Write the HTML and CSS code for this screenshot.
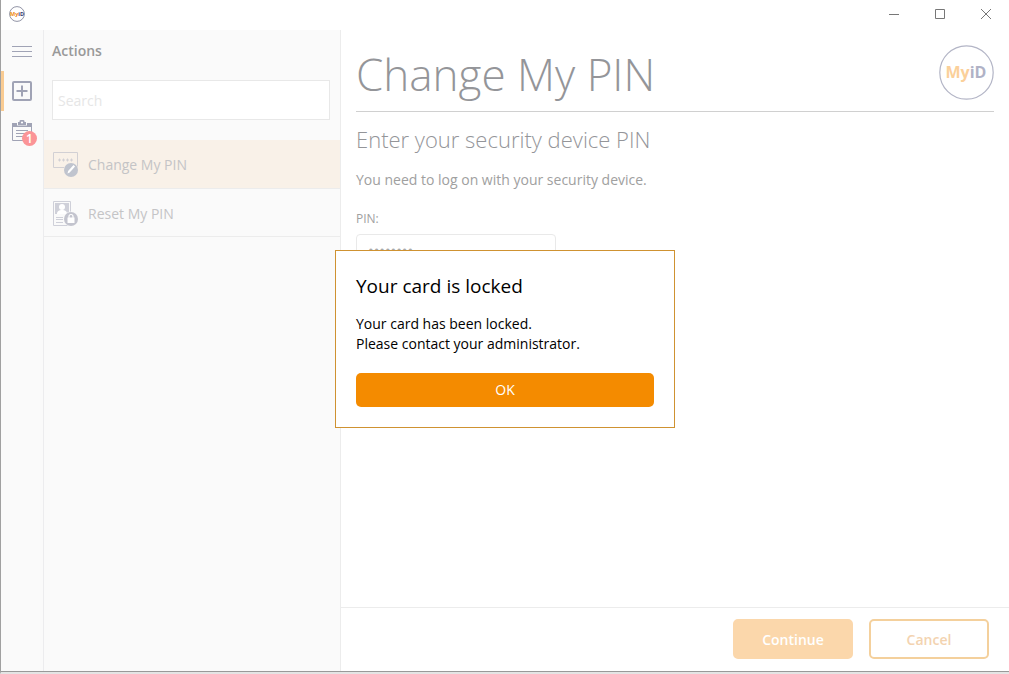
FILE: index.html
```html
<!DOCTYPE html>
<html lang="en">
<head>
	<meta charset="UTF-8">
	<meta name="viewport" content="width=device-width, initial-scale=1">
	<title>MyID</title>
	<link rel="stylesheet" href="styles.css">
</head>
<body>
	<div class="window">
		<!-- title bar -->
		<header class="titlebar">
			<svg class="app-icon" viewBox="0 0 16 16" role="img" aria-label="MyiD">
				<circle cx="8" cy="8" r="7.4" fill="#fff" stroke="#76788f" stroke-width="0.8"/>
				<text x="8" y="10" text-anchor="middle" font-size="5.5"><tspan fill="#f08a10">My</tspan><tspan fill="#363a6e">iD</tspan></text>
			</svg>
			<div class="win-buttons">
				<button type="button" aria-label="Minimize"><svg viewBox="0 0 12 12"><path d="M1 6.5h10"/></svg></button>
				<button type="button" aria-label="Maximize"><svg viewBox="0 0 12 12"><path d="M1.5 1.5h9v9h-9z"/></svg></button>
				<button type="button" aria-label="Close"><svg viewBox="0 0 12 12"><path d="M1 1l10 10M11 1L1 11"/></svg></button>
			</div>
		</header>

		<div class="content">
			<!-- icon rail -->
			<nav class="rail">
				<button type="button" aria-label="Menu">
					<svg viewBox="0 0 24 24"><path d="M2 7.5h20M2 12.5h20M2 17.5h20"/></svg>
				</button>
				<button type="button" class="current" aria-label="Actions">
					<svg viewBox="0 0 24 24" class="bold"><rect x="3" y="3" width="18" height="18" rx="1"/><path d="M12 6.500v11M6.500 12h11"/></svg>
				</button>
				<button type="button" aria-label="Tasks, 1 new">
					<svg viewBox="0 0 24 24">
						<path d="M2.500 5v16.500h19V5"/>
						<path class="solid" d="M2 4h5v2.500h10V4h5v4H2zM8 3h1.500V1.800L10.500 1h3l1 .8V3H16v3H8z"/>
						<circle cx="12" cy="3.500" r="1.100" fill="#fff" stroke="none"/>
						<path d="M6 11.500h12M6 14.500h12M6 17.500h8"/>
					</svg>
					<span class="badge">1</span>
				</button>
			</nav>

			<!-- actions list -->
			<aside class="actions">
				<h2>Actions</h2>
				<input type="search" class="search" placeholder="Search" aria-label="Search">
				<ul>
					<li><a href="#" class="selected">
						<svg viewBox="0 0 26 26">
							<path d="M.5.5h24v15H.5z" fill="none" stroke="#d2d0d4"/>
							<path d="M5 8h3M6.500 6.500v3M9 8h3M10.500 6.500v3M13 8h3M14.500 6.500v3M17 8h3M18.500 6.500v3" fill="none" stroke="#d2d0d4"/>
							<circle cx="18" cy="18" r="7.500" fill="#f9f1e8"/>
							<circle cx="18" cy="18" r="7" fill="#c0c4ce"/>
							<path d="M14.500 21.500l.6-2.400 5.400-6 1.600 1.500-5.400 6z" fill="#fff"/>
						</svg>
						Change My PIN</a></li>
					<li><a href="#">
						<svg viewBox="0 0 26 26">
							<path d="M.5.5h17v24H.5z" fill="none" stroke="#cfd0d9"/>
							<path d="M2 2h14v11H2z" fill="#cfd0d9"/>
							<circle cx="9" cy="6" r="3" fill="#fff"/>
							<path d="M4 13c0-3 2-4 5-4s5 1 5 4z" fill="#fff"/>
							<path d="M3 16.500h7M3 18.500h7M3 21.500h7" stroke="#cfd0d9" fill="none"/>
							<circle cx="18" cy="18" r="7.500" fill="#fafafa"/>
							<circle cx="18" cy="18" r="7" fill="#c3c4ce"/>
							<path d="M14.500 16.500h7v5.500h-7z" fill="#fff"/>
							<path d="M16 17v-1.500a2 2 0 0 1 4 0V17" fill="none" stroke="#fff" stroke-width="1.200"/>
						</svg>
						Reset My PIN</a></li>
				</ul>
			</aside>

			<!-- workflow -->
			<main>
				<div class="page-head">
					<h1>Change My PIN</h1>
					<svg class="logo" viewBox="0 0 56 56" role="img" aria-label="MyiD">
						<circle cx="28.500" cy="28.500" r="26.700" fill="#fff" stroke="#b3b5c6" stroke-width="1.200"/>
						<text x="28" y="34" text-anchor="middle" font-size="16"><tspan fill="#fbd09a">My</tspan><tspan fill="#b0b2c6">iD</tspan></text>
					</svg>
				</div>
				<form id="pin-form" class="pin-form">
					<h2>Enter your security device PIN</h2>
					<p>You need to log on with your security device.</p>
					<label for="pin">PIN:</label>
					<input type="password" id="pin" value="12345678">
				</form>
				<footer>
					<button type="submit" form="pin-form" class="btn primary">Continue</button>
					<button type="button" class="btn outline">Cancel</button>
				</footer>
			</main>
		</div>

		<!-- message box -->
		<div class="overlay">
			<section class="dialog" role="alertdialog" aria-labelledby="dlg-title" aria-describedby="dlg-text">
				<h2 id="dlg-title">Your card is locked</h2>
				<p id="dlg-text">Your card has been locked.<br>Please contact your administrator.</p>
				<button type="button" class="ok">OK</button>
			</section>
		</div>
	</div>
</body>
</html>
```
FILE: styles.css
```css
* {
	box-sizing: border-box;
}
body, h1, h2, p, ul {
	margin: 0;
	padding: 0;
}
body {
	background: #fff;
	font-family: "Open Sans", "Noto Sans", sans-serif;
	font-size: 14px;
	line-height: 20px;
	color: #a0a0a0;
}
button, input {
	font: inherit;
}
button {
	padding: 0;
	border: 0;
	background: none;
}
ul {
	list-style: none;
}

/* window frame */
.window {
	position: relative;
	display: flex;
	flex-direction: column;
	min-height: 100vh;
	border-left: 1px solid #a0a0a0;
	border-bottom: 2px solid #e4e4e4;
}
.titlebar {
	display: flex;
	align-items: center;
	justify-content: space-between;
	height: 30px;
	padding: 0 0 2px 8px;
}
.app-icon {
	width: 16px;
	height: 16px;
}
.app-icon text, .logo text {
	font-family: "Open Sans", sans-serif;
	font-weight: 700;
}
.win-buttons {
	display: flex;
}
.win-buttons button {
	width: 46px;
	height: 28px;
}
.win-buttons svg {
	display: block;
	width: 12px;
	height: 12px;
	margin: 0 auto;
	fill: none;
	stroke: #777;
}
.content {
	flex: 1;
	display: flex;
	border-bottom: 1px solid #999;
}

/* icon rail */
.rail {
	width: 43px;
	padding-top: 1px;
	background: #fafafa;
	border-right: 1px solid #ececee;
}
.rail button {
	position: relative;
	display: block;
	width: 100%;
	height: 40px;
	border-left: 3px solid transparent;
	padding-right: 3px;
}
.rail .current {
	border-left-color: #f9cb92;
}
.rail svg {
	display: block;
	width: 24px;
	height: 24px;
	margin: 0 auto;
	fill: none;
	stroke: #a0a3b5;
}
.rail .bold {
	stroke-width: 2;
}
.rail .solid {
	fill: #a0a3b5;
	stroke: none;
}
.badge {
	position: absolute;
	right: 6px;
	bottom: 5px;
	width: 15px;
	height: 15px;
	border-radius: 50%;
	background: #fb9497;
	color: #fff;
	font-size: 12px;
	line-height: 15px;
	font-weight: 600;
	text-align: center;
}

/* actions list */
.actions {
	width: 297px;
	background: #fafafa;
	border-right: 1px solid #ececec;
}
.actions h2 {
	padding: 11px 8px 9px;
	font-size: 14px;
	font-weight: 600;
	color: #999;
}
.search {
	display: block;
	width: calc(100% - 18px);
	height: 40px;
	margin: 10px 8px 20px;
	padding: 0 5px;
	border: 1px solid #e8e8e8;
	border-radius: 0;
	background: #fff;
	appearance: none;
}
.search::placeholder {
	color: #e6e6e6;
}
.actions li a {
	display: flex;
	align-items: center;
	gap: 9px;
	height: 48px;
	padding: 2px 9px 0;
	border-bottom: 1px solid #ececec;
	color: #c4c4c6;
	text-decoration: none;
}
.actions .selected {
	background: #f9f1e8;
	height: 49px;
}
.actions li svg {
	width: 26px;
	height: 26px;
}

/* workflow */
main {
	flex: 1;
	display: flex;
	flex-direction: column;
}
.page-head {
	display: flex;
	align-items: center;
	justify-content: space-between;
	height: 82px;
	padding-top: 3px;
	margin: 0 15px;
	border-bottom: 1px solid #d0d0d0;
}
h1 {
	padding-top: 3px;
	font-size: 44px;
	line-height: 60px;
	font-weight: 300;
	color: #949599;
}
.logo {
	width: 56px;
	height: 56px;
}
.pin-form {
	flex: 1;
	padding: 11px 15px;
}
.pin-form h2 {
	font-size: 22px;
	line-height: 32px;
	font-weight: 300;
	color: #949599;
}
.pin-form p {
	margin: 15px 0 21px;
}
.pin-form label {
	display: block;
	font-size: 12px;
	line-height: 16px;
}
.pin-form input {
	display: block;
	width: 200px;
	height: 32px;
	margin-top: 7px;
	padding: 0 11px;
	border: 1px solid #e9e9e9;
	border-radius: 4px;
	font-size: 15px;
	color: #aaa;
}
footer {
	display: flex;
	justify-content: flex-end;
	gap: 16px;
	padding: 11px 20px 12px;
	border-top: 1px solid #ececec;
}
.btn {
	width: 120px;
	height: 40px;
	padding-top: 1px;
	border: 2px solid #fbd7ab;
	border-radius: 5px;
	font-weight: 600;
}
.primary {
	background: #fbd7ab;
	color: #fff;
}
.outline {
	border-color: #f4d09c;
	color: #f3d3b0;
}

/* message box */
.overlay {
	position: absolute;
	inset: 0;
	display: flex;
	align-items: center;
	justify-content: center;
	padding-top: 6px;
}
.dialog {
	width: 340px;
	padding: 20px;
	border: 1px solid #cf9231;
	background: #fff;
	color: #000;
}
.dialog h2 {
	font-size: 19px;
	line-height: 30px;
	font-weight: 400;
}
.dialog p {
	margin: 13px 0 19px;
}
.ok {
	display: block;
	width: 100%;
	height: 34px;
	border-radius: 5px;
	background: #f48b00;
	color: #fff;
}
```
